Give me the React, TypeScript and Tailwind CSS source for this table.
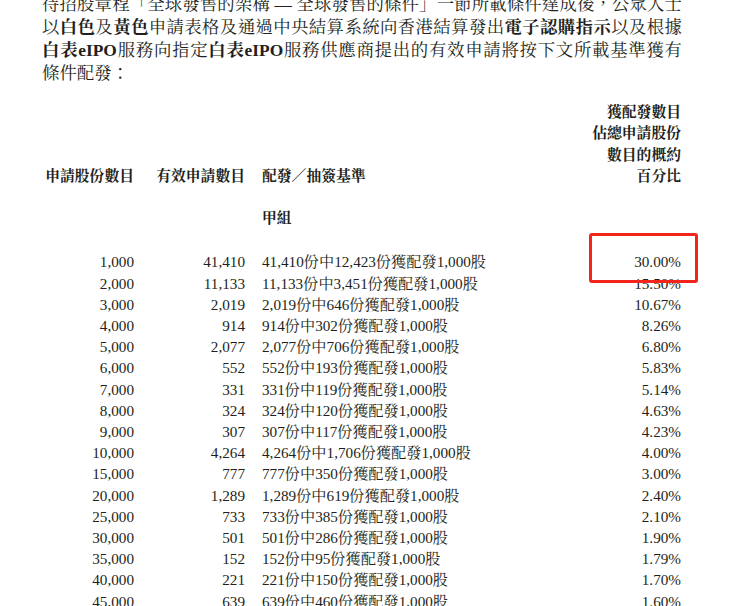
import React from "react";

const rows: [string, string, string, string][] = [
  ["1,000", "41,410", "41,410份中12,423份獲配發1,000股", "30.00%"],
  ["2,000", "11,133", "11,133份中3,451份獲配發1,000股", "15.50%"],
  ["3,000", "2,019", "2,019份中646份獲配發1,000股", "10.67%"],
  ["4,000", "914", "914份中302份獲配發1,000股", "8.26%"],
  ["5,000", "2,077", "2,077份中706份獲配發1,000股", "6.80%"],
  ["6,000", "552", "552份中193份獲配發1,000股", "5.83%"],
  ["7,000", "331", "331份中119份獲配發1,000股", "5.14%"],
  ["8,000", "324", "324份中120份獲配發1,000股", "4.63%"],
  ["9,000", "307", "307份中117份獲配發1,000股", "4.23%"],
  ["10,000", "4,264", "4,264份中1,706份獲配發1,000股", "4.00%"],
  ["15,000", "777", "777份中350份獲配發1,000股", "3.00%"],
  ["20,000", "1,289", "1,289份中619份獲配發1,000股", "2.40%"],
  ["25,000", "733", "733份中385份獲配發1,000股", "2.10%"],
  ["30,000", "501", "501份中286份獲配發1,000股", "1.90%"],
  ["35,000", "152", "152份中95份獲配發1,000股", "1.79%"],
  ["40,000", "221", "221份中150份獲配發1,000股", "1.70%"],
  ["45,000", "639", "639份中460份獲配發1,000股", "1.60%"],
];

const font =
  "font-['Liberation_Serif','Noto_Serif_CJK_TC','Noto_Sans_CJK_TC',serif]";

export default function App() {
  return (
    <div
      className={`relative h-[606px] w-[734px] overflow-hidden bg-white text-[#231f20] ${font}`}
    >
      <div className="mt-[-7.5px] w-[682px] pl-[42px] text-[17.4px] leading-[23px]">
        <div className="whitespace-nowrap text-justify [text-align-last:justify]">
          待招股章程「全球發售的架構 — 全球發售的條件」一節所載條件達成後，公眾人士
        </div>
        <div className="whitespace-nowrap text-justify [text-align-last:justify]">
          以<b>白色</b>及<b>黃色</b>申請表格及通過中央結算系統向香港結算發出
          <b>電子認購指示</b>以及根據
        </div>
        <div className="whitespace-nowrap text-justify [text-align-last:justify]">
          <b>白表eIPO</b>服務向指定<b>白表eIPO</b>
          服務供應商提出的有效申請將按下文所載基準獲有
        </div>
        <div className="whitespace-nowrap">條件配發：</div>
      </div>

      <div className="mt-[17.5px] ml-[42px] w-[639px] text-[15.2px] leading-[21.2px]">
        <div className="grid grid-cols-[92px_111px_1fr_auto] items-end text-[14.8px] font-bold leading-[21.3px]">
          <div className="whitespace-nowrap text-right">申請股份數目</div>
          <div className="whitespace-nowrap text-right">有效申請數目</div>
          <div className="whitespace-nowrap pl-[17px]">配發／抽簽基準</div>
          <div className="text-right">
            <div>獲配發數目</div>
            <div>佔總申請股份</div>
            <div>數目的概約</div>
            <div>百分比</div>
          </div>
        </div>

        <div className="mt-[21.2px] grid grid-cols-[92px_111px_1fr_auto]">
          <div />
          <div />
          <div className="pl-[17px] text-[14.8px] font-bold">甲組</div>
          <div />
        </div>

        <div className="mt-[21.8px] grid grid-cols-[92px_111px_1fr_auto]">
          {rows.map((r) => (
            <React.Fragment key={r[0]}>
              <div className="text-right">{r[0]}</div>
              <div className="text-right">{r[1]}</div>
              <div className="whitespace-nowrap pl-[17px]">{r[2]}</div>
              <div className="text-right">{r[3]}</div>
            </React.Fragment>
          ))}
        </div>
      </div>

      <div className="absolute left-[589px] top-[233px] h-[50px] w-[109px] rounded-[3px] border-[3px] border-[#f3241b]" />
    </div>
  );
}
